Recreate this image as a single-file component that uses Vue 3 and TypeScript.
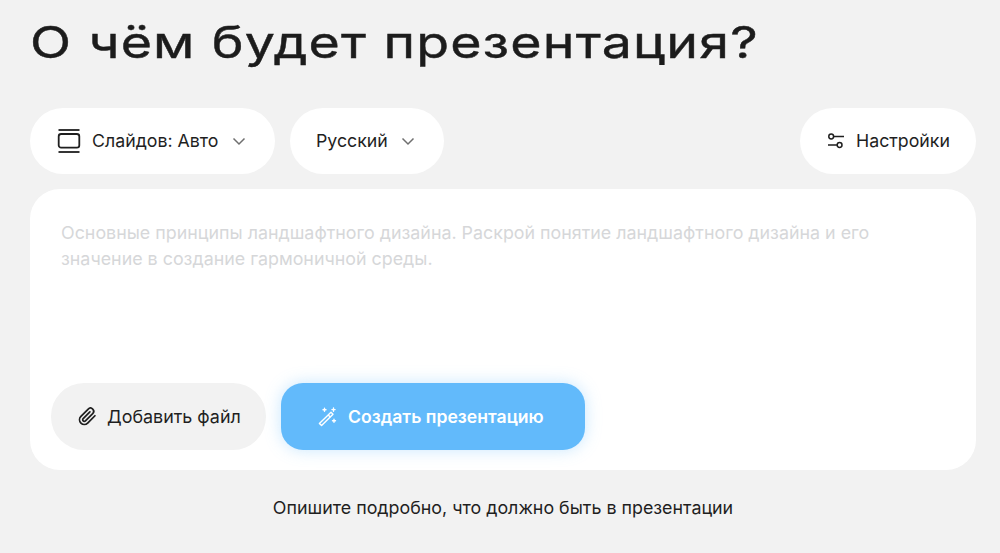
<script setup lang="ts">
const placeholder =
  'Основные принципы ландшафтного дизайна. Раскрой понятие ландшафтного дизайна и его значение в создание гармоничной среды.'
</script>

<template>
  <main class="page">
    <h1 class="title"><span class="title-text">О чём будет презентация?</span></h1>

    <div class="toolbar">
      <button class="pill slides">
        <svg class="ico-slides" width="24" height="24" viewBox="0 0 24 24" fill="none" stroke="#1f1f1f">
          <path d="M1.5 1h21" stroke-width="1.8" />
          <rect x="1.7" y="5" width="20.6" height="13.6" rx="2.4" stroke-width="1.8" />
          <path d="M1.5 23h21" stroke-width="1.8" />
        </svg>
        <span>Слайдов: Авто</span>
        <svg class="chev" width="14" height="14" viewBox="0 0 14 14" fill="none" stroke="#6f6f6f" stroke-width="1.5">
          <path d="M1.5 4.5 7 10l5.5-5.5" />
        </svg>
      </button>
      <button class="pill lang">
        <span>Русский</span>
        <svg class="chev" width="14" height="14" viewBox="0 0 14 14" fill="none" stroke="#6f6f6f" stroke-width="1.5">
          <path d="M1.5 4.5 7 10l5.5-5.5" />
        </svg>
      </button>
      <button class="pill settings">
        <svg width="18" height="18" viewBox="0 0 18 18" fill="none" stroke="#1f1f1f" stroke-width="1.5">
          <circle cx="4.2" cy="4.5" r="2.4" />
          <path d="M6.8 4.5H17M1 13h9" />
          <circle cx="12.6" cy="13" r="2.4" />
        </svg>
        <span>Настройки</span>
      </button>
    </div>

    <section class="card">
      <p class="placeholder">{{ placeholder }}</p>
      <div class="actions">
        <button class="btn file">
          <svg width="19" height="19" viewBox="0 0 24 24" fill="none" stroke="#1f1f1f" stroke-width="2.2" stroke-linecap="round" stroke-linejoin="round">
            <path d="M21.4 11.05 12.2 20.25a6 6 0 0 1-8.49-8.49l9.2-9.19a4 4 0 0 1 5.66 5.66l-9.21 9.19a2 2 0 0 1-2.83-2.83l8.49-8.48" />
          </svg>
          <span>Добавить файл</span>
        </button>
        <button class="btn create">
          <svg width="20" height="20" viewBox="0 0 20 20" fill="none" stroke="#fff" stroke-width="1.4" stroke-linejoin="round">
            <path d="M14 5.2 16 7.2 4.6 18.6 2.4 16.4Z" />
            <path d="M11.2 8 13.4 10.2" />
            <path d="M7.5 1.2v3M6 2.7h3M16.5 1v3.2M14.9 2.6h3.2M17 12.2v3M15.5 13.7h3" stroke-linecap="round" />
          </svg>
          <span>Создать презентацию</span>
        </button>
      </div>
    </section>

    <p class="hint">Опишите подробно, что должно быть в презентации</p>
  </main>
</template>

<style>
html,
body {
  margin: 0;
  background: #f2f2f2;
}
</style>

<style scoped>
.page {
  box-sizing: border-box;
  width: 1000px;
  height: 553px;
  padding: 0 24px 0 30px;
  overflow: hidden;
  font-family: Inter, "Liberation Sans", sans-serif;
  color: #1f1f1f;
}
.title {
  margin: 0;
  height: 108px;
  font-size: 44px;
  font-weight: 400;
  line-height: 84px;
  white-space: nowrap;
}
.title-text {
  display: inline-block;
  letter-spacing: 0.95px;
  color: #1c1c1c;
  -webkit-text-stroke: 0.45px #1c1c1c;
  transform: scaleX(1.22);
  transform-origin: left center;
}
.toolbar {
  display: flex;
  gap: 15px;
  height: 66px;
}
button {
  border: 0;
  font: inherit;
  color: inherit;
  display: flex;
  align-items: center;
}
.pill {
  height: 66px;
  border-radius: 33px;
  background: #fff;
  font-size: 17.75px;
}
.pill span {
  position: relative;
  top: -1px;
}
.slides {
  width: 245px;
  padding: 0 0 0 27px;
  gap: 11px;
}
.slides .chev {
  margin-left: 3px;
}
.lang {
  width: 154px;
  padding: 0 0 0 26px;
  gap: 13px;
}
.settings {
  width: 176px;
  margin-left: auto;
  padding: 0 0 0 27px;
  gap: 11px;
}
.card {
  box-sizing: border-box;
  height: 281px;
  margin-top: 15px;
  padding: 31px 21px 20px;
  border-radius: 30px;
  background: #fff;
  display: flex;
  flex-direction: column;
  justify-content: space-between;
}
.placeholder {
  margin: 0;
  padding: 0 10px;
  max-width: 840px;
  font-size: 17.85px;
  line-height: 26px;
  color: #d6d7d9;
}
.actions {
  display: flex;
  gap: 15px;
}
.btn {
  height: 67px;
  font-size: 17.9px;
}
.file {
  width: 215px;
  padding-left: 27px;
  gap: 10px;
  border-radius: 33px;
  background: #f2f2f2;
}
.create {
  width: 304px;
  padding-left: 36px;
  gap: 11px;
  border-radius: 22px;
  background: #62bafb;
  color: #fff;
  font-size: 17.6px;
  font-weight: 600;
  box-shadow: 0 0 16px rgba(98, 186, 251, 0.35);
}
.hint {
  margin: 26px 0 0;
  text-align: center;
  font-size: 17.85px;
  line-height: 24px;
}
</style>
